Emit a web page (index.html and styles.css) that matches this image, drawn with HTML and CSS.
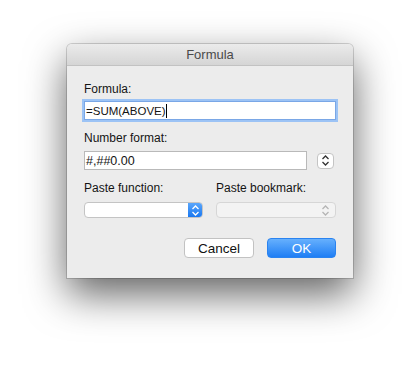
FILE: index.html
```html
<!DOCTYPE html>
<html lang="en">
<head>
    <meta charset="UTF-8">
    <title>Formula</title>
    <link rel="stylesheet" href="styles.css">
</head>
<body>
    <div class="dialog">
        <div class="titlebar">Formula</div>
        <div class="content">
            <label class="label">Formula:</label>
            <div class="field focused">=SUM(ABOVE)<span class="caret"></span></div>

            <label class="label second">Number format:</label>
            <div class="row">
                <div class="field short">#,##0.00</div>
                <div class="stepper">
                    <svg width="9" height="11" viewBox="0 0 9 11">
                        <path d="M1.5 4 L4.5 1 L7.5 4 M1.5 7 L4.5 10 L7.5 7" fill="none" stroke="#333" stroke-width="1.3"/>
                    </svg>
                </div>
            </div>

            <div class="pair">
                <div class="col">
                    <label class="label">Paste function:</label>
                    <div class="popup">
                        <div class="popup-arrow">
                            <svg width="9" height="11" viewBox="0 0 9 11">
                                <path d="M1.5 4 L4.5 1 L7.5 4 M1.5 7 L4.5 10 L7.5 7" fill="none" stroke="#fff" stroke-width="1.3"/>
                            </svg>
                        </div>
                    </div>
                </div>
                <div class="col">
                    <label class="label">Paste bookmark:</label>
                    <div class="popup disabled">
                        <div class="popup-arrow">
                            <svg width="9" height="11" viewBox="0 0 9 11">
                                <path d="M1.5 4 L4.5 1 L7.5 4 M1.5 7 L4.5 10 L7.5 7" fill="none" stroke="#b5b5b5" stroke-width="1.3"/>
                            </svg>
                        </div>
                    </div>
                </div>
            </div>

            <div class="buttons">
                <button class="btn">Cancel</button>
                <button class="btn primary">OK</button>
            </div>
        </div>
    </div>
</body>
</html>
```

FILE: styles.css
```css
html {
    height: 100%;
}

body {
    margin: 0;
    height: 100%;
    box-sizing: border-box;
    background: #ffffff;
    font-family: "Liberation Sans", Arial, sans-serif;
    font-size: 12px;
    color: #141414;
    padding: 44px 0 0 67px;
}

.dialog {
    width: 286px;
    height: 234px;
    background: #ececec;
    border-radius: 5px 5px 0 0;
    box-shadow: 0 0 0 1px rgba(0, 0, 0, 0.16), 0 16px 40px rgba(0, 0, 0, 0.62);
    overflow: hidden;
}

.titlebar {
    height: 21px;
    line-height: 21px;
    text-align: center;
    color: #4a4a4a;
    font-size: 13px;
    background: linear-gradient(#ebebeb, #d5d5d5);
    border-bottom: 1px solid #c2c2c2;
}

.content {
    padding: 15px 17px 0 17px;
}

.label {
    display: block;
    height: 16px;
    line-height: 16px;
    margin-bottom: 4px;
}

.label.second {
    margin-top: 10px;
    margin-bottom: 5px;
}

.field {
    height: 19px;
    line-height: 18px;
    background: #fff;
    border: 1px solid #b9b9b9;
    padding: 0 1px;
    box-sizing: border-box;
    width: 252px;
    font-size: 12.5px;
}

.field.focused {
    font-size: 11.5px;
    border: 1px solid #7aa7e6;
    box-shadow: 0 0 0 2px #9cc3f5;
}

.caret {
    display: inline-block;
    width: 1px;
    height: 14px;
    background: #000;
    vertical-align: -3px;
}

.row {
    display: flex;
    align-items: center;
}

.field.short {
    width: 223px;
}

.stepper {
    width: 17px;
    height: 16px;
    margin-left: 10px;
    background: #fff;
    border: 1px solid #c4c4c4;
    border-radius: 4px;
    box-sizing: border-box;
    display: flex;
    align-items: center;
    justify-content: center;
}

.pair {
    display: flex;
    gap: 13px;
    margin-top: 10px;
}

.col {
    width: 119px;
}

.col + .col {
    width: 120px;
}

.pair .label {
    margin-bottom: 6px;
}

.popup {
    height: 16px;
    background: #fff;
    border: 1px solid #c4c4c4;
    border-radius: 4px;
    box-sizing: border-box;
    display: flex;
    justify-content: flex-end;
    overflow: hidden;
}

.popup-arrow {
    width: 14px;
    background: linear-gradient(#5aa6fb, #1a78f1);
    display: flex;
    align-items: center;
    justify-content: center;
}

.popup.disabled {
    background: #f3f3f3;
    border-color: #d6d6d6;
}

.popup.disabled .popup-arrow {
    background: none;
    width: 20px;
}

.buttons {
    display: flex;
    justify-content: flex-end;
    gap: 13px;
    margin-top: 20px;
}

.btn {
    font-family: "Liberation Sans", Arial, sans-serif;
    font-size: 13.5px;
    height: 20px;
    width: 70px;
    padding: 0;
    background: #fff;
    color: #111;
    border: 1px solid #c2c2c2;
    border-radius: 4px;
}

.btn.primary {
    width: 69px;
    color: #fff;
    border: 1px solid #2a83f0;
    background: linear-gradient(#66b0fd, #1f7ef4);
}
```
